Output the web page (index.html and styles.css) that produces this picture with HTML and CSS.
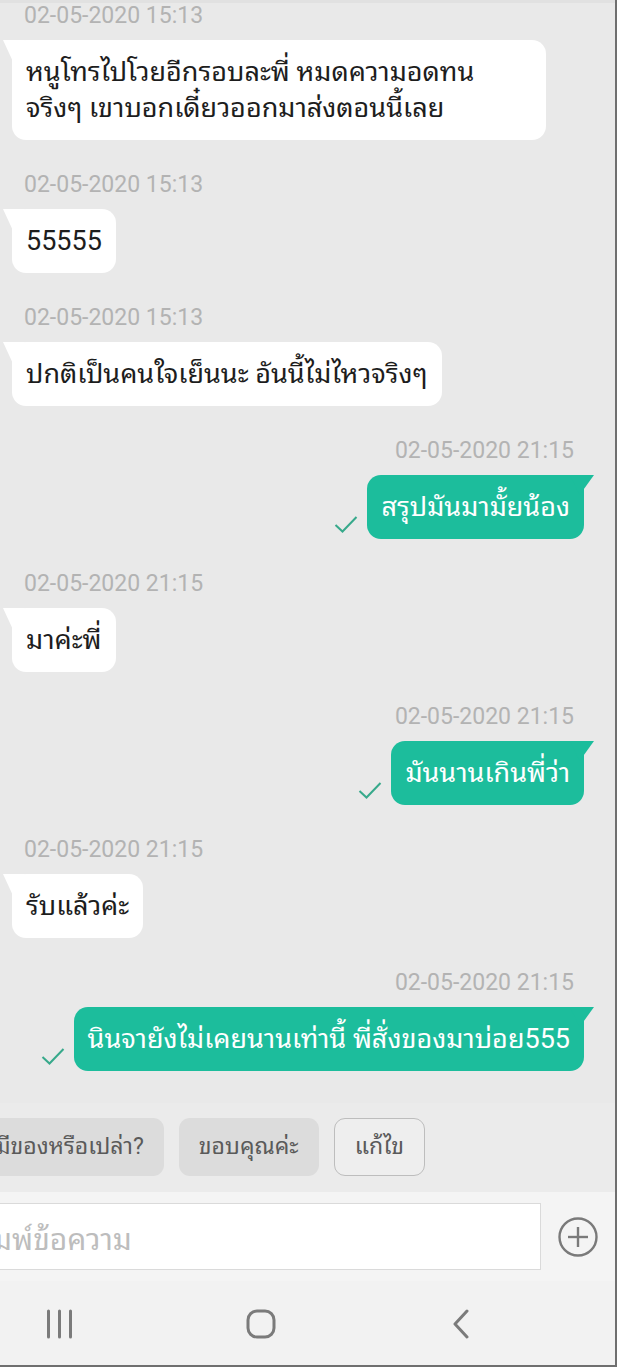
FILE: index.html
```html
<!DOCTYPE html>
<html lang="th">
<head>
<meta charset="utf-8">
<title>Chat</title>
<link rel="stylesheet" href="styles.css">
</head>
<body>
<div class="screen">
  <div class="chat">
    <div class="msg in">
      <div class="ts">02-05-2020 15:13</div>
      <div class="bubble wide">หนูโทรไปโวยอีกรอบละพี่ หมดความอดทน<br>จริงๆ เขาบอกเดี๋ยวออกมาส่งตอนนี้เลย</div>
    </div>
    <div class="msg in">
      <div class="ts">02-05-2020 15:13</div>
      <div class="bubble">55555</div>
    </div>
    <div class="msg in">
      <div class="ts">02-05-2020 15:13</div>
      <div class="bubble">ปกติเป็นคนใจเย็นนะ อันนี้ไม่ไหวจริงๆ</div>
    </div>
    <div class="msg out">
      <div class="ts">02-05-2020 21:15</div>
      <div class="row">
        <svg class="check" width="24" height="18" viewBox="0 0 24 18"><polyline points="1.5,10 8.5,16.5 22.5,2" fill="none" stroke="#37a98b" stroke-width="2"/></svg>
        <div class="bubble">สรุปมันมามั้ยน้อง</div>
      </div>
    </div>
    <div class="msg in">
      <div class="ts">02-05-2020 21:15</div>
      <div class="bubble">มาค่ะพี่</div>
    </div>
    <div class="msg out">
      <div class="ts">02-05-2020 21:15</div>
      <div class="row">
        <svg class="check" width="24" height="18" viewBox="0 0 24 18"><polyline points="1.5,10 8.5,16.5 22.5,2" fill="none" stroke="#37a98b" stroke-width="2"/></svg>
        <div class="bubble">มันนานเกินพี่ว่า</div>
      </div>
    </div>
    <div class="msg in">
      <div class="ts">02-05-2020 21:15</div>
      <div class="bubble">รับแล้วค่ะ</div>
    </div>
    <div class="msg out">
      <div class="ts">02-05-2020 21:15</div>
      <div class="row">
        <svg class="check" width="24" height="18" viewBox="0 0 24 18"><polyline points="1.5,10 8.5,16.5 22.5,2" fill="none" stroke="#37a98b" stroke-width="2"/></svg>
        <div class="bubble">นินจายังไม่เคยนานเท่านี้ พี่สั่งของมาบ่อย555</div>
      </div>
    </div>
    <div class="msg in faded">
      <div class="ts">02-05-2020 21:16</div>
    </div>
  </div>

  <div class="quick">
    <div class="chip">มีของหรือเปล่า?</div>
    <div class="chip">ขอบคุณค่ะ</div>
    <div class="chip edit">แก้ไข</div>
  </div>

  <div class="composer">
    <div class="field"><span class="ph">พิมพ์ข้อความ</span></div>
    <svg class="plus" width="42" height="42" viewBox="0 0 42 42">
      <circle cx="21" cy="21" r="18.5" fill="none" stroke="#7a7a7a" stroke-width="2.4"/>
      <line x1="11" y1="21" x2="31" y2="21" stroke="#7a7a7a" stroke-width="2.4"/>
      <line x1="21" y1="11" x2="21" y2="31" stroke="#7a7a7a" stroke-width="2.4"/>
    </svg>
  </div>

  <div class="nav">
    <svg class="nav-recent" width="28" height="30" viewBox="0 0 28 30">
      <line x1="2.5" y1="2" x2="2.5" y2="28" stroke="#7b7b7b" stroke-width="3" stroke-linecap="round"/>
      <line x1="13.5" y1="2" x2="13.5" y2="28" stroke="#7b7b7b" stroke-width="3" stroke-linecap="round"/>
      <line x1="24.5" y1="2" x2="24.5" y2="28" stroke="#7b7b7b" stroke-width="3" stroke-linecap="round"/>
    </svg>
    <svg class="nav-home" width="30" height="30" viewBox="0 0 30 30">
      <rect x="2" y="2" width="26" height="26" rx="9" fill="none" stroke="#7b7b7b" stroke-width="3"/>
    </svg>
    <svg class="nav-back" width="18" height="30" viewBox="0 0 18 30">
      <polyline points="15,2 3,15 15,28" fill="none" stroke="#7b7b7b" stroke-width="3" stroke-linecap="round" stroke-linejoin="round"/>
    </svg>
  </div>
</div>
</body>
</html>
```

FILE: styles.css
```css
html, body {
  margin: 0;
  padding: 0;
}

body {
  width: 617px;
  height: 1367px;
  overflow: hidden;
  background: #e9e9e9;
  font-family: Roboto, "Noto Sans Thai Looped", "Loma", "Garuda", "Noto Sans Thai", "Noto Sans", sans-serif;
}

.screen {
  width: 615px;
  height: 1365px;
  border-right: 2px solid #6f6f6f;
  border-bottom: 2px solid #6f6f6f;
  display: flex;
  flex-direction: column;
  overflow: hidden;
  background: #e9e9e9;
}

.chat {
  flex: none;
  height: 1100px;
  border-top: 3px solid #e1e1e1;
  overflow: hidden;
}

.msg {
  display: flex;
  flex-direction: column;
  margin-bottom: 32px;
}

.msg.in {
  align-items: flex-start;
  padding-left: 12px;
}

.msg.out {
  align-items: flex-end;
  padding-right: 31px;
}

.ts {
  font-size: 23px;
  line-height: 26px;
  color: #b3b3b3;
  margin-bottom: 11px;
  white-space: nowrap;
}

.in .ts {
  margin-left: 12px;
}

.out .ts {
  margin-right: 10px;
}

.faded .ts {
  color: #d8d8d8;
}

.bubble {
  position: relative;
  font-size: 27px;
  line-height: 36px;
  padding: 14px;
  border-radius: 14px;
  background: #ffffff;
  color: #1d1d1d;
  white-space: nowrap;
}

.bubble.wide {
  width: 506px;
}

.in .bubble::before {
  content: "";
  position: absolute;
  left: -9px;
  top: 0;
  width: 22px;
  height: 20px;
  background: #ffffff;
  clip-path: polygon(0 0, 100% 0, 42% 100%);
}

.out .bubble {
  background: #1cbd9c;
  color: #ffffff;
}

.out .bubble::after {
  content: "";
  position: absolute;
  right: -10px;
  top: 0;
  width: 24px;
  height: 20px;
  background: #1cbd9c;
  clip-path: polygon(0 0, 100% 0, 40% 100%);
}

.row {
  display: flex;
  align-items: flex-end;
  gap: 9px;
}

.check {
  margin-bottom: 6px;
}

.quick {
  flex: none;
  height: 89px;
  box-sizing: border-box;
  padding-top: 15px;
  display: flex;
  align-items: flex-start;
  gap: 15px;
  margin-left: -24px;
  background: #ebebeb;
}

.chip {
  flex: none;
  height: 58px;
  box-sizing: border-box;
  padding: 0 20px;
  border-radius: 11px;
  background: #dcdcdc;
  color: #5a5a5a;
  font-size: 23px;
  line-height: 58px;
  white-space: nowrap;
}

.chip.edit {
  background: #eeeeee;
  border: 1.5px solid #bdbdbd;
  line-height: 55px;
}

.composer {
  flex: none;
  height: 89px;
  box-sizing: border-box;
  background: #f4f4f4;
  display: flex;
  align-items: center;
  overflow: hidden;
}

.field {
  flex: none;
  width: 570px;
  height: 67px;
  margin-left: -29px;
  box-sizing: border-box;
  padding-left: 0;
  background: #ffffff;
  border: 1.5px solid #dadada;
  display: flex;
  align-items: center;
  overflow: hidden;
}

.ph {
  font-size: 30px;
  color: #bdbdbd;
  white-space: nowrap;
}

.plus {
  flex: none;
  margin-left: 16px;
}

.nav {
  flex: 1;
  background: #f2f2f2;
  display: flex;
  align-items: center;
  padding-top: 2px;
  padding-left: 46px;
}

.nav-home {
  margin-left: 172px;
}

.nav-back {
  margin-left: 176px;
}
```
